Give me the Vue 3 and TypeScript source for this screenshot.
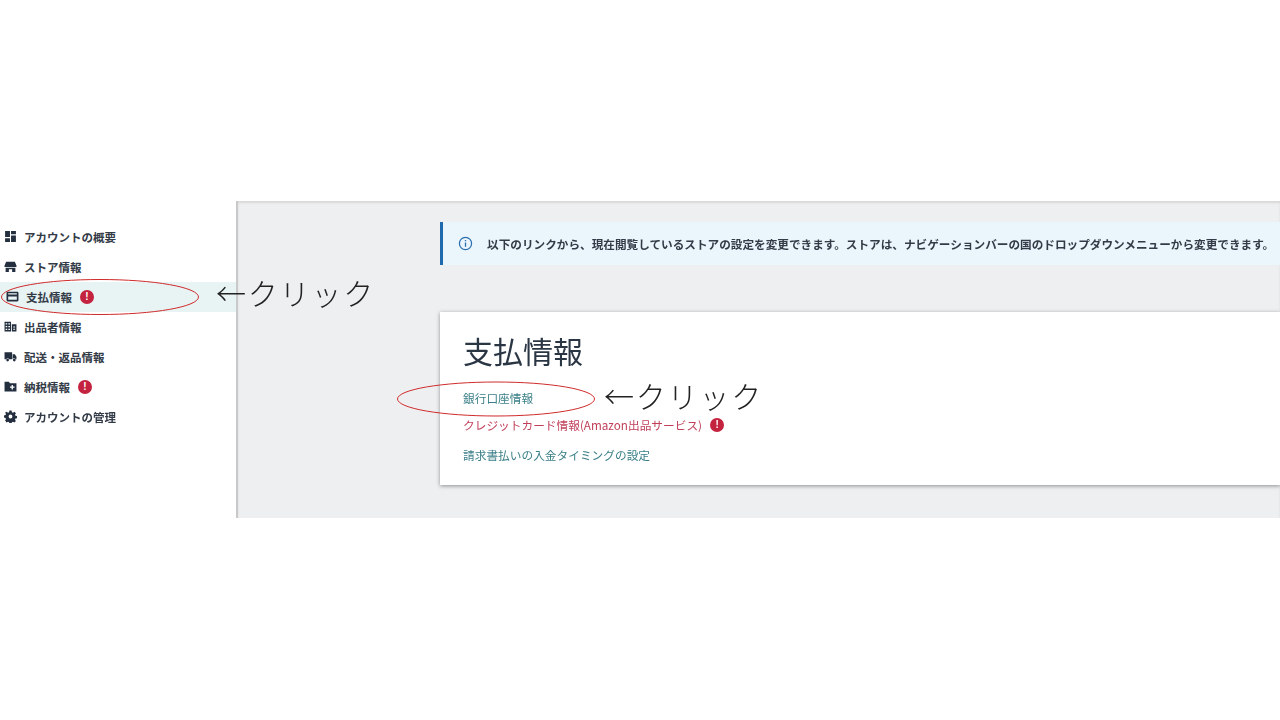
<script setup lang="ts">
interface NavItem { label: string; icon: string; alert?: boolean; active?: boolean }
const nav: NavItem[] = [
  { label: 'アカウントの概要', icon: 'dash' },
  { label: 'ストア情報', icon: 'store' },
  { label: '支払情報', icon: 'card', alert: true, active: true },
  { label: '出品者情報', icon: 'building' },
  { label: '配送・返品情報', icon: 'truck' },
  { label: '納税情報', icon: 'folder', alert: true },
  { label: 'アカウントの管理', icon: 'gear' },
]
</script>

<template>
  <div class="page">
    <div class="frame">
      <aside class="side">
        <div v-for="item in nav" :key="item.label" class="nav" :class="{ active: item.active }">
          <svg class="ico" viewBox="0 0 24 24">
            <path v-if="item.icon === 'dash'" d="M2 2h9v11H2zM13 2h9v6h-9zM13 10h9v12h-9zM2 15h9v7H2z" />
            <path v-else-if="item.icon === 'store'" d="M4 3h16l3 7v3H1v-3zM3 14.500h18V22h-6v-5H9v5H3z" />
            <path v-else-if="item.icon === 'card'" fill-rule="evenodd" d="M3 3h18a2 2 0 0 1 2 2v14a2 2 0 0 1-2 2H3a2 2 0 0 1-2-2V5a2 2 0 0 1 2-2zm1 3v2.500h16V6zm0 6v6h16v-6z" />
            <path v-else-if="item.icon === 'building'" fill-rule="evenodd" d="M1 3h12v18H1zM3 6v2.500h3V6zm5 0v2.500h3V6zM3 11v2.500h3V11zm5 0v2.500h3V11zM3 16v2.500h3V16zm5 0v2.500h3V16zM14.500 8H23v13h-8.500zM17 12v2h3.500v-2zm0 4v2h3.500v-2z" />
            <path v-else-if="item.icon === 'truck'" d="M1 4h14v13H9.500a3 3 0 0 0-5.500 0H1zM16 8h4l3 4.500V17h-1.500a3 3 0 0 0-5.500 0zM6.700 16a2.500 2.500 0 1 1 0 5 2.500 2.500 0 0 1 0-5zM19 16a2.500 2.500 0 1 1 0 5 2.500 2.500 0 0 1 0-5z" />
            <path v-else-if="item.icon === 'folder'" fill-rule="evenodd" d="M1 3h8l2 3h12v15H1zm13 6v3h-3v2.500h3v3h2.500v-3h3V12h-3V9z" />
            <path v-else fill-rule="evenodd" d="M10 1h4l.6 3 2 .9 2.600-1.700 2.800 2.800-1.700 2.600.9 2 3 .6v4l-3 .6-.9 2 1.700 2.600-2.800 2.800-2.600-1.700-2 .9-.6 3h-4l-.6-3-2-.9-2.600 1.700L2 19.200l1.700-2.600-.9-2-3-.6v-4l3-.6.9-2L2 4.800l2.800-1.600 2.600 1.700 2-.9zM12 8.500a3.500 3.500 0 1 0 0 7 3.500 3.500 0 0 0 0-7z" />
          </svg>
          <span class="nav-label">{{ item.label }}</span>
          <span v-if="item.alert" class="alert">!</span>
        </div>
      </aside>
      <main class="main">
        <div class="banner">
          <svg class="info" viewBox="0 0 16 16">
            <circle cx="8" cy="8" r="6.500" fill="none" stroke="#2a6eb0" stroke-width="1.300" />
            <path d="M7.300 7h1.400v4.500H7.300zM7.300 4.200h1.400v1.500H7.300z" fill="#2a6eb0" />
          </svg>
          <span class="banner-text">以下のリンクから、現在閲覧しているストアの設定を変更できます。ストアは、ナビゲーションバーの国のドロップダウンメニューから変更できます。</span>
        </div>
        <section class="card">
          <h1 class="title">支払情報</h1>
          <a class="link first">銀行口座情報</a>
          <div class="link-row">
            <a class="link danger">クレジットカード情報(Amazon出品サービス)</a>
            <span class="alert">!</span>
          </div>
          <a class="link">請求書払いの入金タイミングの設定</a>
        </section>
      </main>
    </div>
    <svg class="ring ring-a" viewBox="0 0 200 38"><ellipse cx="100" cy="19" rx="98.500" ry="17.500" /></svg>
    <svg class="ring ring-b" viewBox="0 0 200 36"><ellipse cx="100" cy="18" rx="98.500" ry="17" /></svg>
    <span class="note note-a">←クリック</span>
    <span class="note note-b">←クリック</span>
  </div>
</template>

<style>
body { margin: 0; background: #fff; }
</style>

<style scoped>
.page {
  position: relative;
  width: 1280px;
  height: 720px;
  padding-top: 201px;
  box-sizing: border-box;
  overflow: hidden;
  background: #fff;
  font-family: "Noto Sans CJK JP", "Noto Sans", sans-serif;
}
.frame { display: flex; height: 317px; filter: blur(.4px); }
.side {
  width: 236px;
  flex: none;
  padding-top: 21px;
  box-sizing: border-box;
  background: #fff;
}
.nav {
  display: flex;
  align-items: center;
  height: 30px;
  box-sizing: border-box;
  padding: 0 0 1px 4px;
  color: #333b47;
  font-size: 11.500px;
  font-weight: 700;
}
.nav.active { background: #e8f3f4; padding-left: 6px; }
.ico { width: 13px; height: 13px; fill: #232f3e; flex: none; }
.nav-label { margin-left: 7px; }
.alert {
  display: inline-flex;
  align-items: center;
  justify-content: center;
  width: 14px;
  height: 14px;
  margin-left: 8px;
  border-radius: 50%;
  background: #c4233f;
  color: #fff;
  font: 700 10px/1 "Liberation Sans", sans-serif;
}
.main {
  flex: 1;
  min-width: 0;
  background: #eeeff1;
  border-left: 2px solid #c9c9c9;
  box-shadow: inset 0 2px 2px #d8d8d8;
  padding: 21px 0 0 202px;
}
.banner {
  display: flex;
  align-items: center;
  height: 43px;
  border-left: 3px solid #1f69ad;
  background: #eaf6fc;
  padding-left: 15px;
  white-space: nowrap;
  overflow: hidden;
}
.info { width: 15px; height: 15px; flex: none; }
.banner-text {
  margin-left: 14px;
  color: #333b47;
  font-size: 11.630px;
  font-weight: 700;
}
.card {
  display: flex;
  flex-direction: column;
  align-items: flex-start;
  height: 173px;
  margin-top: 47px;
  padding: 16px 0 0 23px;
  box-sizing: border-box;
  background: #fff;
  box-shadow: 0 1px 4px rgba(0, 0, 0, .4);
}
.title {
  margin: 0;
  color: #2b3645;
  font-size: 30px;
  font-weight: 400;
  line-height: 44px;
}
.link {
  color: #3b7f88;
  font-size: 11.700px;
  line-height: 18px;
}
.first { margin-top: 17px; }
.link-row { display: flex; align-items: center; margin-top: 9px; margin-bottom: 12px; }
.danger { color: #c0405a; }
.ring { position: absolute; fill: none; stroke: #cf2a2a; stroke-width: 1; }
.ring-a { left: 0; top: 278px; width: 200px; height: 38px; }
.ring-b { left: 396px; top: 381px; width: 200px; height: 36px; }
.note {
  position: absolute;
  color: #222;
  font-size: 30px;
  line-height: 40px;
  font-weight: 300;
  letter-spacing: 1.800px;
  white-space: nowrap;
}
.note-a { left: 216px; top: 272px; }
.note-b { left: 604px; top: 375px; }
</style>
